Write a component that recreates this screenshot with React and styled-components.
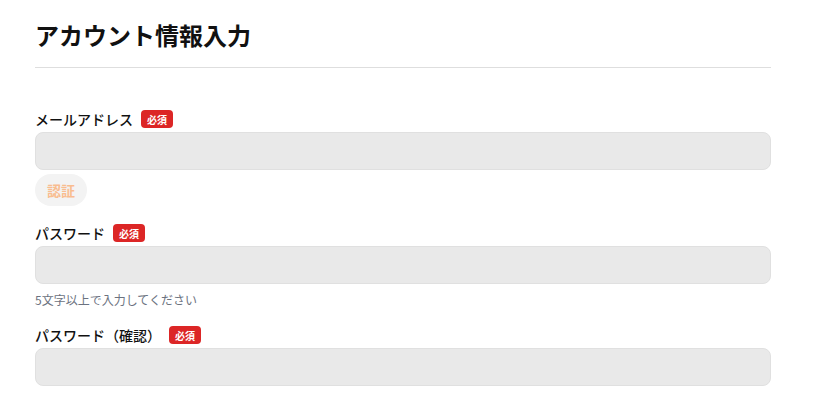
import React from 'react'
import styled, { createGlobalStyle } from 'styled-components'

const GlobalStyle = createGlobalStyle`
  body {
    margin: 0;
    background: #ffffff;
    font-family: "Noto Sans CJK JP", "Noto Sans", sans-serif;
    color: #111111;
  }
`

const Page = styled.div`
  width: 736px;
  margin-left: 35px;
  padding-top: 19px;
`

const Title = styled.h1`
  margin: 0;
  font-size: 24px;
  line-height: 32px;
  font-weight: 700;
  padding-bottom: 16px;
  border-bottom: 1px solid #dedede;
`

const Form = styled.div`
  display: flex;
  flex-direction: column;
  padding-top: 42px;
`

const Field = styled.div`
  display: flex;
  flex-direction: column;
  gap: 4px;
  margin-top: ${(p) => p.$top || 0}px;
`

const LabelRow = styled.div`
  display: flex;
  align-items: center;
  gap: 8px;
  height: 18px;
`

const Label = styled.label`
  font-size: 14px;
  font-weight: 500;
  line-height: 16px;
  margin-bottom: 1px;
`

const Badge = styled.span`
  display: inline-flex;
  align-items: center;
  justify-content: center;
  width: 32px;
  height: 18px;
  border-radius: 4px;
  background: #dc2626;
  color: #ffffff;
  font-size: 10px;
  font-weight: 700;
`

const Input = styled.input`
  box-sizing: border-box;
  width: 100%;
  height: 38px;
  border: 1px solid #e0e0e0;
  border-radius: 8px;
  background: #e9e9e9;
  padding: 0 12px;
  font-size: 14px;
  font-family: inherit;
  outline: none;
`

const VerifyButton = styled.button`
  align-self: flex-start;
  width: 52px;
  height: 32px;
  border: none;
  border-radius: 16px;
  background: #f3f3f3;
  color: #f9bd90;
  font-family: inherit;
  font-size: 14px;
  font-weight: 700;
  padding: 0;
`

const Help = styled.p`
  margin: 2px 0 0;
  font-size: 12px;
  line-height: 20px;
  color: #6b7280;
`

function FormField({ label, type = 'text', top, children }) {
  return (
    <Field $top={top}>
      <LabelRow>
        <Label>{label}</Label>
        <Badge>必須</Badge>
      </LabelRow>
      <Input type={type} />
      {children}
    </Field>
  )
}

export default function App() {
  return (
    <>
      <GlobalStyle />
      <Page>
        <Title>アカウント情報入力</Title>
        <Form>
          <FormField label="メールアドレス" type="email">
            <VerifyButton>認証</VerifyButton>
          </FormField>
          <FormField label="パスワード" type="password" top={18}>
            <Help>5文字以上で入力してください</Help>
          </FormField>
          <FormField label="パスワード（確認）" type="password" top={16} />
        </Form>
      </Page>
    </>
  )
}
